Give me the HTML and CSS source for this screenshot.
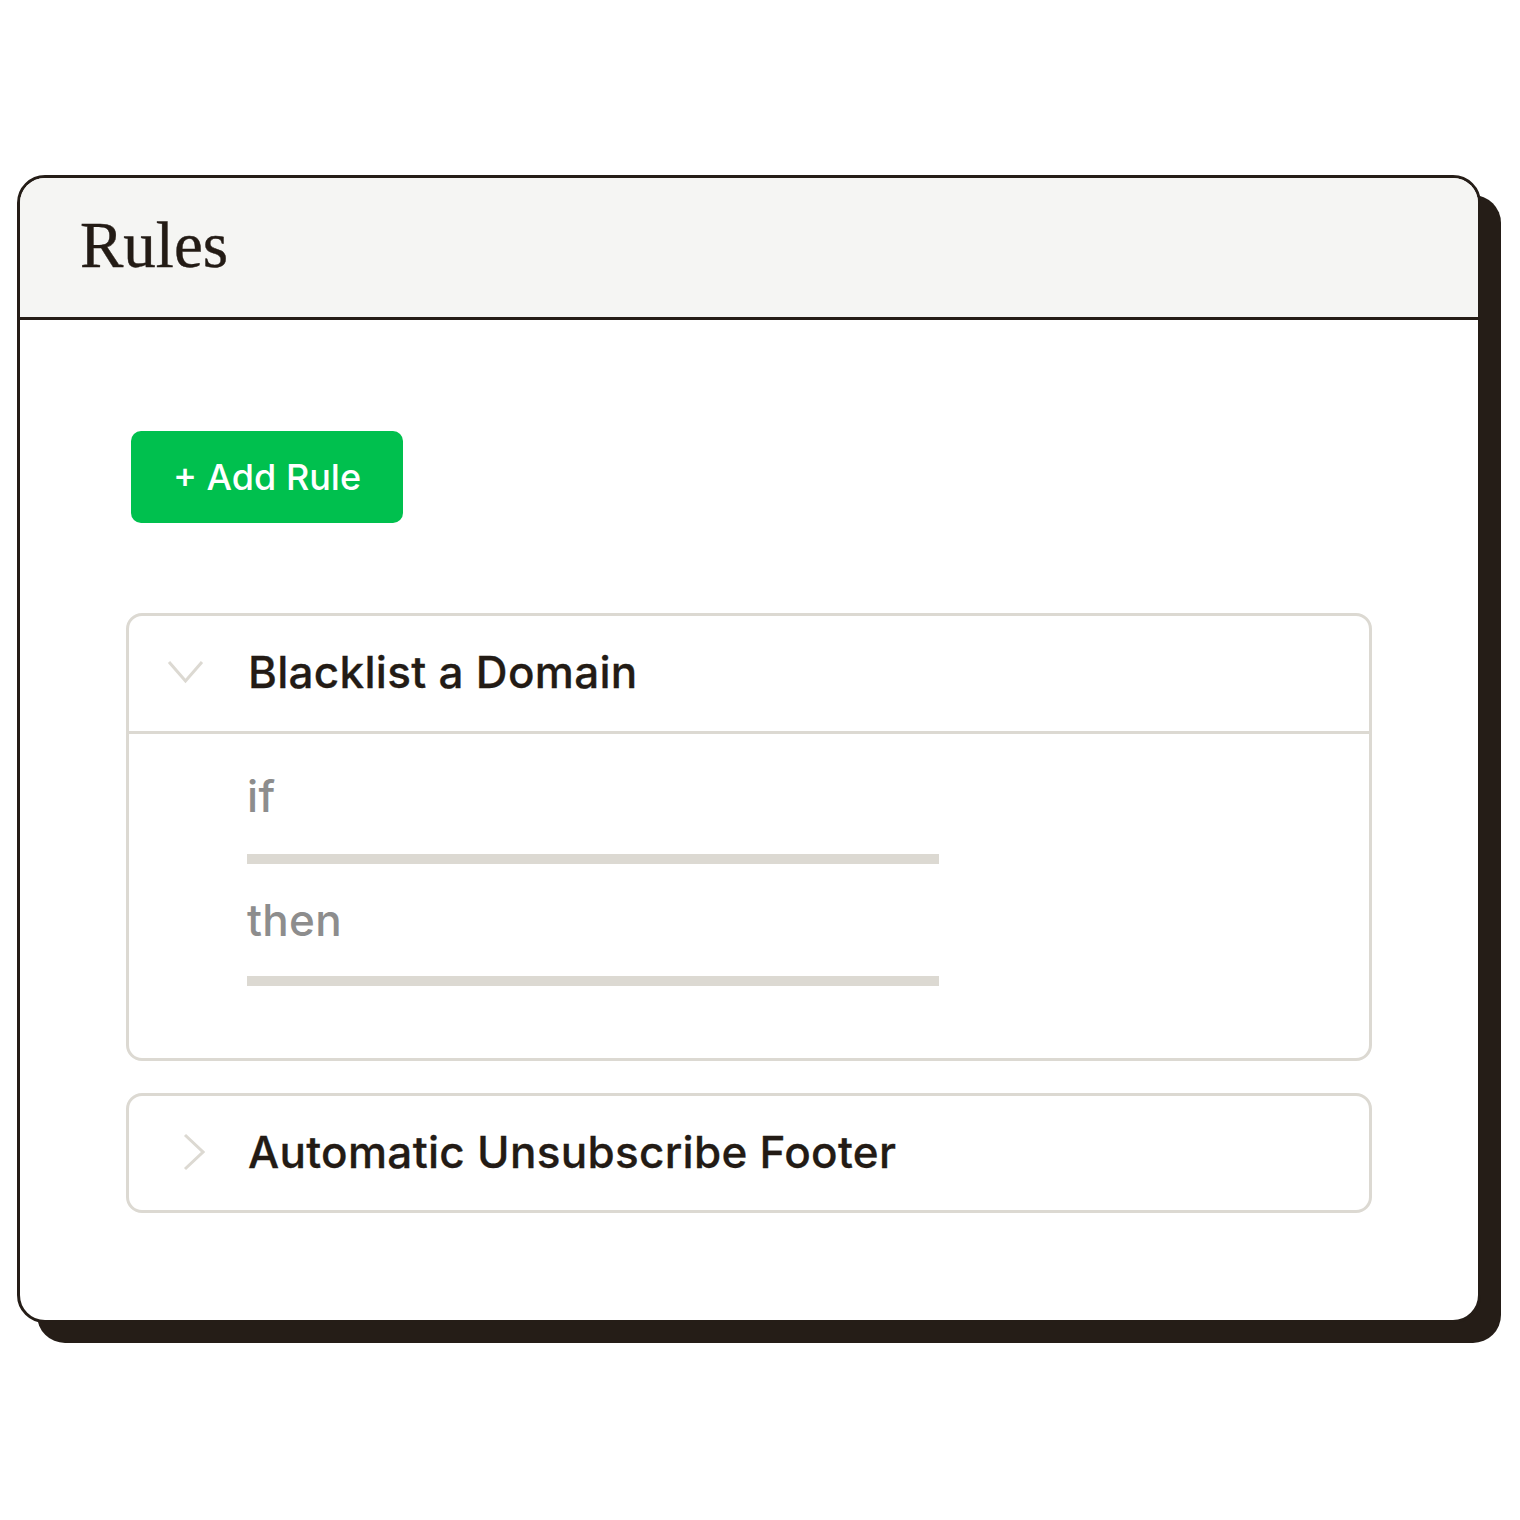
FILE: index.html
```html
<!DOCTYPE html>
<html>
<head>
<meta charset="utf-8">
<link rel="stylesheet" href="styles.css">
</head>
<body>
<div class="card">
  <div class="card-header">
    <h1 class="title">Rules</h1>
  </div>
  <div class="card-body">
    <button class="add-btn">+ Add Rule</button>
    <div class="rule open">
      <div class="rule-head">
        <svg class="chev" width="40" height="40" viewBox="0 0 40 40"><path d="M3 10 L19.5 29 L36 10" fill="none" stroke="#dcd9d2" stroke-width="3"/></svg>
        <span class="rule-name">Blacklist a Domain</span>
      </div>
      <div class="rule-body">
        <div class="label">if</div>
        <div class="bar"></div>
        <div class="label">then</div>
        <div class="bar"></div>
      </div>
    </div>
    <div class="rule">
      <div class="rule-head">
        <svg class="chev" width="40" height="40" viewBox="0 0 40 40"><path d="M20 3 L38 20 L20 37" fill="none" stroke="#dcd9d2" stroke-width="3"/></svg>
        <span class="rule-name">Automatic Unsubscribe Footer</span>
      </div>
    </div>
  </div>
</div>
</body>
</html>
```
FILE: styles.css
```css
* { box-sizing: border-box; }
html, body { margin: 0; padding: 0; background: #ffffff; }
body { width: 1520px; height: 1520px; padding-top: 175px; padding-left: 17px; }

.card {
  width: 1464px;
  height: 1148px;
  border: 3px solid #251d17;
  border-radius: 28px;
  background: #ffffff;
  box-shadow: 20px 20px 0 #251d17;
  overflow: hidden;
  display: flex;
  flex-direction: column;
}

.card-header {
  height: 142px;
  flex: none;
  background: #f5f5f3;
  border-bottom: 3px solid #251d17;
  padding: 30px 0 0 60px;
}

.title {
  margin: 0;
  font-family: "Liberation Serif", "DejaVu Serif", serif;
  font-weight: 400;
  font-size: 65px;
  line-height: normal;
  color: #231b15;
  -webkit-text-stroke: 0.4px #231b15;
}

.card-body {
  padding: 111px 106px 0 106px;
  display: flex;
  flex-direction: column;
  align-items: stretch;
}

.add-btn {
  align-self: flex-start;
  margin-left: 5px;
  width: 272px;
  height: 92px;
  border: none;
  border-radius: 10px;
  background: #00c04e;
  color: #ffffff;
  font-family: "Inter", "Roboto", sans-serif;
  font-weight: 500;
  font-size: 36px;
  padding: 0 0 0 0;
  margin-bottom: 90px;
}

.rule {
  border: 3px solid #dcd9d2;
  border-radius: 16px;
  margin-bottom: 32px;
}

.rule-head {
  height: 115px;
  display: flex;
  align-items: center;
  padding-left: 37px;
  padding-bottom: 3px;
}
.rule:not(.open) .rule-head { height: 114px; padding-left: 36px; padding-bottom: 2px; }

.open .rule-head { border-bottom: 3px solid #dcd9d2; height: 118px; }

.chev { flex: none; display: block; }
.open .chev { margin-right: 42px; }
.rule:not(.open) .chev { margin-right: 43px; }

.rule-name {
  font-family: "Inter", "Roboto", sans-serif;
  font-weight: 500;
  font-size: 44px;
  line-height: 52px;
  letter-spacing: 0.3px;
  color: #231b15;
  -webkit-text-stroke: 0.3px #231b15;
}

.rule-body {
  padding: 36px 0 72px 118px;
}

.label {
  font-family: "Inter", "Roboto", sans-serif;
  font-weight: 500;
  font-size: 44px;
  line-height: 52px;
  letter-spacing: 0.3px;
  color: #8d8d8d;
  margin-bottom: 32px;
}
.label + .bar + .label { margin-top: 30px; margin-bottom: 30px; }

.bar {
  width: 692px;
  height: 10px;
  background: #dcd9d2;
}
```
